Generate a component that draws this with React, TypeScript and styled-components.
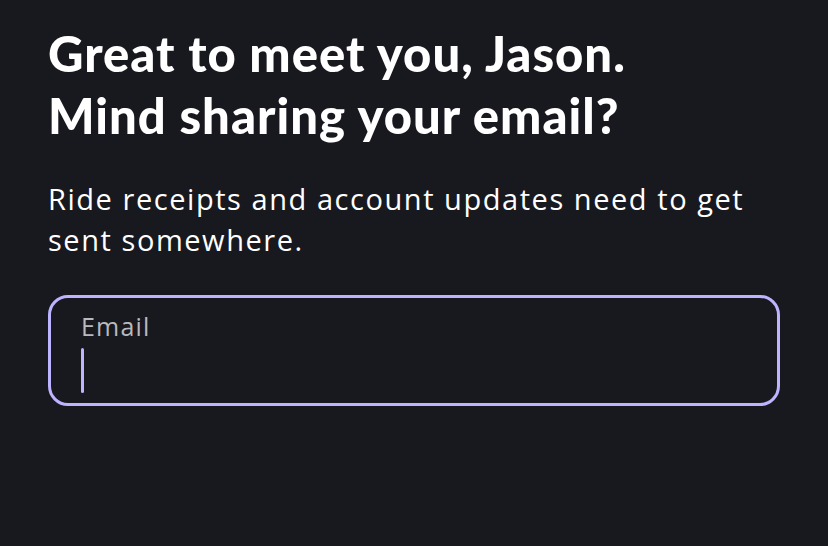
import React from "react";
import styled, { createGlobalStyle } from "styled-components";

const Global = createGlobalStyle`
  html, body { margin: 0; padding: 0; background: #18181f; }
  body { width: 828px; height: 546px; overflow: hidden; }
`;

const Page = styled.main`
  box-sizing: border-box;
  width: 828px;
  height: 546px;
  background: #18181f;
  padding: 22px 48px 0 48px;
  display: flex;
  flex-direction: column;
`;

const Heading = styled.h1`
  margin: 0;
  font-family: "Lato", sans-serif;
  font-weight: 900;
  font-size: 49px;
  line-height: 62px;
  letter-spacing: 1px;
  color: #ffffff;
`;

const Subtext = styled.p`
  margin: 32px 0 0 0;
  font-family: "Open Sans", sans-serif;
  font-weight: 400;
  font-size: 29px;
  line-height: 41px;
  letter-spacing: 1.55px;
  color: #ffffff;
`;

const Field = styled.div`
  box-sizing: border-box;
  margin-top: 35px;
  width: 732px;
  height: 111px;
  border: 3px solid #bdb4ff;
  border-radius: 20px;
  padding: 13px 30px 0 30px;
  display: flex;
  flex-direction: column;
`;

const Label = styled.label`
  font-family: "Open Sans", sans-serif;
  font-size: 25px;
  line-height: 30px;
  letter-spacing: 1.2px;
  color: #b9b9bd;
`;

const Caret = styled.span`
  margin-top: 7px;
  width: 3px;
  height: 45px;
  border-radius: 2px;
  background: #bdb4ff;
`;

export default function App() {
  return (
    <>
      <Global />
      <Page>
        <Heading>
          Great to meet you, Jason.
          <br />
          Mind sharing your email?
        </Heading>
        <Subtext>
          Ride receipts and account updates need to get
          <br />
          sent somewhere.
        </Subtext>
        <Field>
          <Label>Email</Label>
          <Caret />
        </Field>
      </Page>
    </>
  );
}
